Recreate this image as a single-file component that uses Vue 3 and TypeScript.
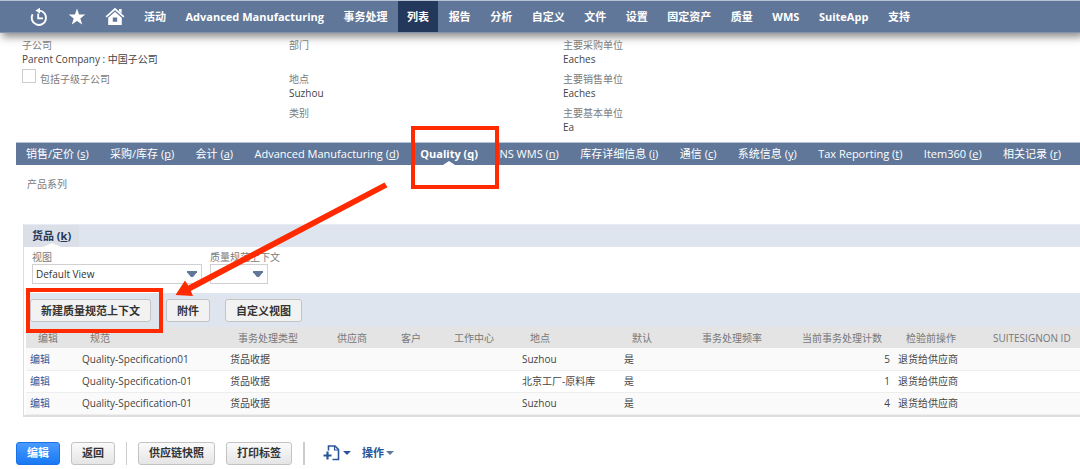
<script setup lang="ts">
import { ref } from 'vue'

interface Tab { label: string; key: string; active?: boolean }
interface Column { title: string; width: number; numeric?: boolean }
interface Row { spec: string; type: string; place: string; isDefault: string; count: number; action: string }
interface Field { label: string; value: string }

const menu: string[] = [
  '活动', 'Advanced Manufacturing', '事务处理', '列表', '报告', '分析', '自定义', '文件',
  '设置', '固定资产', '质量', 'WMS', 'SuiteApp', '支持',
]
const activeMenu = '列表'

const placeFields: Field[] = [
  { label: '部门', value: '' },
  { label: '地点', value: 'Suzhou' },
  { label: '类别', value: '' },
]
const unitFields: Field[] = [
  { label: '主要采购单位', value: 'Eaches' },
  { label: '主要销售单位', value: 'Eaches' },
  { label: '主要基本单位', value: 'Ea' },
]

const tabs: Tab[] = [
  { label: '销售/定价', key: 's' },
  { label: '采购/库存', key: 'p' },
  { label: '会计', key: 'a' },
  { label: 'Advanced Manufacturing', key: 'd' },
  { label: 'Quality', key: 'q', active: true },
  { label: 'NS WMS', key: 'n' },
  { label: '库存详细信息', key: 'i' },
  { label: '通信', key: 'c' },
  { label: '系统信息', key: 'y' },
  { label: 'Tax Reporting', key: 't' },
  { label: 'Item360', key: 'e' },
  { label: '相关记录', key: 'r' },
]

const columns: Column[] = [
  { title: '编辑', width: 52 },
  { title: '规范', width: 148 },
  { title: '事务处理类型', width: 99 },
  { title: '供应商', width: 64 },
  { title: '客户', width: 53 },
  { title: '工作中心', width: 76 },
  { title: '地点', width: 102 },
  { title: '默认', width: 70 },
  { title: '事务处理频率', width: 100 },
  { title: '当前事务处理计数', width: 104, numeric: true },
  { title: '检验前操作', width: 87 },
  { title: 'SUITESIGNON ID', width: 99 },
]
const total = columns.reduce((sum, c) => sum + c.width, 0)
const share = (c: Column): string => `${(c.width / total) * 100}%`

const rows: Row[] = [
  { spec: 'Quality-Specification01', type: '货品收据', place: 'Suzhou', isDefault: '是', count: 5, action: '退货给供应商' },
  { spec: 'Quality-Specification-01', type: '货品收据', place: '北京工厂-原料库', isDefault: '是', count: 1, action: '退货给供应商' },
  { spec: 'Quality-Specification-01', type: '货品收据', place: 'Suzhou', isDefault: '是', count: 4, action: '退货给供应商' },
]

const includeChildren = ref(false)
const view = ref('Default View')
const context = ref('')
</script>

<template>
  <div class="page">
    <header class="topbar">
      <div class="shortcuts">
        <button type="button" class="icon-btn" aria-label="最近记录">
          <svg viewBox="0 0 20 20" width="20" height="20" fill="none" stroke="#fff">
            <path d="M3.600 7.200A7.200 7.200 0 1 0 10.500 3.600" stroke-width="1.900" />
            <path d="M6.400 3.600L11 .8V6.400z" fill="#fff" stroke="none" />
            <path d="M9.200 6.400v5h4.800" stroke-width="1.800" />
          </svg>
        </button>
        <button type="button" class="icon-btn" aria-label="快捷方式">
          <svg viewBox="0 0 20 20" width="20" height="20" fill="#fff">
            <path d="M10 1.600l2.100 6h6.200l-5 3.800 1.900 6.200-5.200-3.700-5.200 3.700 1.900-6.200-5-3.800h6.200z" />
          </svg>
        </button>
        <button type="button" class="icon-btn" aria-label="主页">
          <svg viewBox="0 0 20 20" width="20" height="20" fill="#fff">
            <path d="M10 .8l9.400 8.400-1.100 1.300L10 3.200l-8.300 7.300L.6 9.200z" />
            <path d="M14 2h2.600v4.600L14 4.300z" />
            <path fill-rule="evenodd" d="M10 4.700l6.800 6V18H3.200v-7.300zM7.800 10.400v4.400h4.400v-4.400z" />
          </svg>
        </button>
      </div>
      <nav class="menu">
        <a v-for="m in menu" :key="m" href="#" :class="{ active: m === activeMenu }">{{ m }}</a>
      </nav>
    </header>

    <main>
      <section class="details">
        <div class="stack">
          <div class="field">
            <span class="label">子公司</span>
            <span class="value">Parent Company : 中国子公司</span>
          </div>
          <div class="check">
            <input id="children" v-model="includeChildren" type="checkbox" />
            <label for="children" class="label">包括子级子公司</label>
          </div>
        </div>
        <div v-for="(group, i) in [placeFields, unitFields]" :key="i" class="stack">
          <div v-for="f in group" :key="f.label" class="field">
            <span class="label">{{ f.label }}</span>
            <span class="value">{{ f.value }}</span>
          </div>
        </div>
      </section>

      <nav class="tabs">
        <a v-for="t in tabs" :key="t.key" href="#" :class="{ active: t.active }">{{ t.label }} (<u>{{ t.key }}</u>)</a>
      </nav>

      <p class="label family">产品系列</p>

      <section class="panel">
        <div class="panel-tabs">
          <a href="#" class="panel-tab">货品 (<u>k</u>)</a>
        </div>
        <div class="filters">
          <div class="filter">
            <label for="view" class="label">视图</label>
            <span class="select wide">
              <select id="view" v-model="view"><option>Default View</option></select>
            </span>
          </div>
          <div class="filter">
            <label for="context" class="label">质量规范上下文</label>
            <span class="select narrow">
              <select id="context" v-model="context"><option value=""></option></select>
            </span>
          </div>
        </div>
        <div class="grid">
          <div class="actions">
            <button type="button" class="btn flat">新建质量规范上下文</button>
            <button type="button" class="btn flat">附件</button>
            <button type="button" class="btn flat">自定义视图</button>
          </div>
          <table>
            <colgroup>
              <col v-for="c in columns" :key="c.title" :style="{ width: share(c) }" />
            </colgroup>
            <thead>
              <tr>
                <th v-for="c in columns" :key="c.title" scope="col" :class="{ num: c.numeric }">{{ c.title }}</th>
              </tr>
            </thead>
            <tbody>
              <tr v-for="(r, i) in rows" :key="i">
                <td><a href="#">编辑</a></td>
                <td>{{ r.spec }}</td>
                <td>{{ r.type }}</td>
                <td></td>
                <td></td>
                <td></td>
                <td>{{ r.place }}</td>
                <td>{{ r.isDefault }}</td>
                <td></td>
                <td class="num">{{ r.count }}</td>
                <td>{{ r.action }}</td>
                <td></td>
              </tr>
            </tbody>
          </table>
        </div>
      </section>
    </main>

    <footer class="footer">
      <button type="button" class="btn primary">编辑</button>
      <button type="button" class="btn">返回</button>
      <span class="rule"></span>
      <button type="button" class="btn">供应链快照</button>
      <button type="button" class="btn">打印标签</button>
      <span class="rule thick"></span>
      <button type="button" class="link-btn new" aria-label="新建">
        <svg viewBox="0 0 18 18" width="18" height="18" fill="none" stroke="#2a5699">
          <path d="M5.500 6.500V2h6.500l3.500 3.500v10H9.500" stroke-width="1.600" />
          <path d="M11.500 2v4h4" stroke-width="1.200" />
          <path d="M4.500 7.500v8M.5 11.500h8" stroke-width="2.200" />
        </svg>
        <i class="caret"></i>
      </button>
      <button type="button" class="link-btn">操作<i class="caret dim"></i></button>
    </footer>

    <svg class="marks" aria-hidden="true" fill="none" stroke="#ff2a00" stroke-width="4">
      <rect x="413" y="128" width="84" height="59" />
      <rect x="28" y="290" width="133" height="41" />
      <path d="M175.500 295L185 280.500l3.300 5L384.500 182.500l3 4.700L190.800 291l2.200 5z" fill="#ff2a00" stroke="none" />
    </svg>
  </div>
</template>

<style>
body {
  margin: 0;
  background: #fff;
}
</style>

<style scoped>
.page {
  position: relative;
  font-family: 'Open Sans', 'Noto Sans CJK SC', sans-serif;
  font-size: 11px;
  line-height: 14px;
  color: #444;
}
.page * {
  box-sizing: border-box;
}
a {
  text-decoration: none;
  color: inherit;
  white-space: nowrap;
}
button,
select {
  font: inherit;
}
.topbar {
  display: flex;
  align-items: stretch;
  height: 33px;
  padding-left: 29px;
  background: #607799;
  border-top: 1px solid #b4c3d3;
  border-bottom: 1px solid #8393ab;
  box-shadow: 3px 3px 8px 1px rgba(0, 0, 0, 0.45);
}
.shortcuts {
  display: flex;
  align-items: center;
  gap: 18px;
}
.icon-btn {
  display: flex;
  padding: 0;
  border: 0;
  background: none;
}
.menu {
  display: flex;
  flex: 1;
  justify-content: space-between;
  margin: 0 161px 0 10px;
}
.menu a {
  display: flex;
  align-items: center;
  padding: 0 9px;
  color: #fff;
  font-weight: 700;
}
.menu a.active {
  background: #24385b;
}
.details {
  display: grid;
  grid-template-columns: 267fr 274fr 517fr;
  padding: 5px 0 0 22px;
}
.stack {
  display: flex;
  flex-direction: column;
  gap: 6px;
}
.field {
  display: flex;
  flex-direction: column;
}
.label {
  font-size: 10px;
  line-height: 14px;
  color: #7b7b7b;
}
.value {
  min-height: 14px;
  font-size: 10px;
}
.check {
  display: flex;
  align-items: flex-start;
  gap: 4px;
}
.check input {
  appearance: none;
  width: 14px;
  height: 14px;
  margin: -3px 0 0;
  border: 1px solid #ccc;
  background: #fff;
}
.tabs {
  display: flex;
  justify-content: space-between;
  align-items: stretch;
  height: 23px;
  margin: 8px 0 0 16px;
  padding: 0 19px 0 10px;
  background: #607799;
  border-top: 1px solid #b4c3d3;
  color: #fff;
}
.tabs a {
  position: relative;
  display: block;
  line-height: 22px;
}
.tabs a.active {
  font-weight: 700;
}
.tabs a.active::after,
.panel-tab::after {
  content: '';
  position: absolute;
  left: 50%;
  bottom: 0;
  margin-left: -6px;
  border: 6px solid transparent;
  border-top: 0;
  border-bottom: 4px solid #fff;
}
.panel-tab::after {
  margin-left: -9px;
  border-left-width: 9px;
  border-right-width: 9px;
}
.family {
  margin: 12px 0 33px 27px;
}
.panel {
  margin-left: 23px;
  border-left: 1px solid #dedede;
  border-bottom: 2px solid #dedede;
}
.panel-tabs {
  display: flex;
  background: #dfe5ee;
  border-top: 1px solid #e8ecf2;
}
.panel-tab {
  position: relative;
  padding: 0 8px;
  line-height: 22px;
  font-weight: 700;
  color: #24385b;
  background: #dadfe8;
}
.filters {
  display: flex;
  gap: 8px;
  padding: 3px 8px 9px;
}
.filter {
  display: flex;
  flex-direction: column;
}
.filter .label {
  white-space: nowrap;
}
.select {
  position: relative;
  display: block;
}
.select.wide {
  width: 170px;
}
.select.narrow {
  width: 58px;
}
.select select {
  appearance: none;
  display: block;
  width: 100%;
  height: 20px;
  padding: 0 20px 0 3px;
  border: 1px solid #d0d0d0;
  border-radius: 0;
  background: #fff;
  color: #333;
  font-size: 10px;
}
.select::after {
  content: '';
  position: absolute;
  right: 5px;
  top: 7px;
  width: 10px;
  height: 6px;
  background: #607799;
  clip-path: polygon(0 0, 100% 0, 100% 20%, 60% 100%, 40% 100%, 0 20%);
  pointer-events: none;
}
.grid {
  margin-left: 2px;
}
.actions {
  display: flex;
  gap: 15px;
  padding: 6px 4px 5px;
  background: #dfe5ee;
}
.btn {
  height: 23px;
  padding: 0 10px;
  border: 1px solid #c3c3c3;
  border-radius: 3px;
  background: linear-gradient(#fafafa, #e5e5e5);
  color: #333;
  font-weight: 700;
  line-height: 20px;
  white-space: nowrap;
}
.btn.flat {
  background: #f2f2f2;
}
.btn.primary {
  border-color: #1b72e8;
  background: linear-gradient(#4a9bff, #1878f3);
  color: #fff;
}
table {
  width: 100%;
  table-layout: fixed;
  border-collapse: collapse;
  font-size: 10px;
}
th,
td {
  padding: 0 4px;
  text-align: left;
  white-space: nowrap;
}
th {
  height: 21px;
  padding: 0 12px;
  background: #e4e4e4;
  color: #777;
  font-weight: 400;
}
td {
  height: 22px;
  border-bottom: 1px solid #eee;
}
td a {
  color: #2a5699;
}
tbody tr:nth-child(odd) {
  background: #fafafa;
}
.num {
  text-align: right;
}
.footer {
  display: flex;
  align-items: center;
  gap: 11px;
  padding: 25px 0 4px 16px;
}
.rule {
  width: 1px;
  height: 23px;
  background: #ccc;
}
.rule.thick {
  width: 2px;
}
.link-btn {
  display: flex;
  align-items: center;
  gap: 2px;
  padding: 0;
  border: 0;
  background: none;
  color: #2a5699;
  font-weight: 700;
}
.link-btn.new {
  margin-left: 7px;
}
.caret {
  border: 4px solid transparent;
  border-top-color: #2a5699;
  border-bottom: 0;
}
.caret.dim {
  border-top-color: #607799;
}
.marks {
  position: absolute;
  left: 0;
  top: 0;
  width: 100%;
  height: 100%;
  overflow: visible;
  pointer-events: none;
}
</style>
